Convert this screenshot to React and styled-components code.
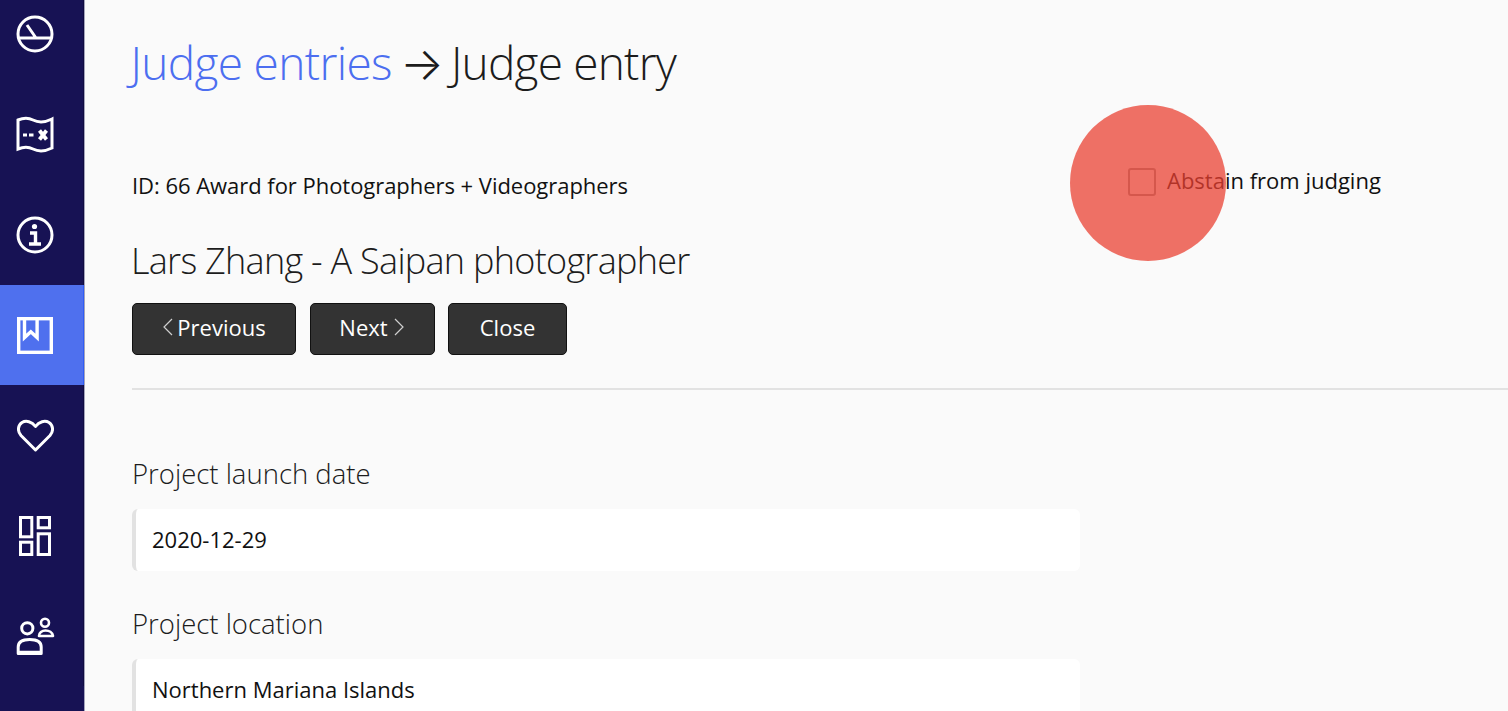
import React from 'react'
import styled, { createGlobalStyle } from 'styled-components'

const GlobalStyle = createGlobalStyle`
  html, body {
    margin: 0;
    height: 100%;
    overflow: hidden;
    background: #fafafa;
    font-family: "Open Sans", "Liberation Sans", sans-serif;
    color: #111;
  }
  * { box-sizing: border-box; }
`

const Page = styled.div`
  display: flex;
  height: 711px;
  overflow: hidden;
  position: relative;
`

const Sidebar = styled.nav`
  flex: 0 0 85px;
  background: #171254;
  overflow: hidden;
  border-right: 1px solid #a4a4bc;
`

const NavList = styled.div`
  display: flex;
  flex-direction: column;
  margin-top: -16px;
`

const NavItem = styled.div`
  height: 100.3px;
  display: flex;
  align-items: center;
  justify-content: center;
  padding-right: 13px;
  background: ${p => (p.$active ? '#4f70ee' : 'transparent')};
  border-right: 1px solid ${p => (p.$active ? '#2f5cf6' : '#100c40')};
  svg { display: block; }
`

const Main = styled.main`
  flex: 1;
  min-width: 0;
  padding: 31px 0 0 47px;
`

const Title = styled.h1`
  margin: 0 0 0 -1.5px;
  font-size: 46px;
  line-height: 63px;
  font-weight: 300;
  letter-spacing: -0.8px;
  white-space: nowrap;
  color: #1c1c1c;
`

const TitleLink = styled.a`
  color: #4c6ef0;
  letter-spacing: -0.65px;
`

const Arrow = styled.span`
  font-family: Inter, "Liberation Sans", sans-serif;
  font-weight: 300;
  letter-spacing: 0;
  margin: 0 -4px 0 -3px;
`

const TopRow = styled.div`
  display: grid;
  grid-template-columns: 996px 1fr;
  margin-top: 75px;
`

const EntryInfo = styled.div`
  min-width: 0;
`

const Meta = styled.div`
  font-size: 22px;
  line-height: 30px;
  letter-spacing: -0.04px;
  white-space: nowrap;
`

const EntryName = styled.h2`
  margin: 36px 0 0 -1px;
  font-size: 36px;
  line-height: 50px;
  font-weight: 300;
  letter-spacing: -0.72px;
  white-space: nowrap;
  color: #1c1c1c;
`

const Abstain = styled.label`
  display: flex;
  align-items: center;
  gap: 11px;
  height: 27px;
  margin-top: -2px;
  font-size: 22px;
  white-space: nowrap;
`

const AbstainText = styled.span`
  margin-bottom: 3px;
`

const CheckBox = styled.span`
  width: 28px;
  height: 28px;
  border: 2px solid #999;
  border-radius: 3px;
`

const Buttons = styled.div`
  display: flex;
  gap: 13.5px;
  margin-top: 17px;
`

const Button = styled.button`
  height: 52px;
  width: ${p => p.$width}px;
  display: flex;
  align-items: center;
  justify-content: center;
  gap: ${p => p.$gap || 4}px;
  padding: 0 0 4px;
  background: #333;
  border: 1px solid #111;
  border-radius: 5px;
  color: #fff;
  font-family: inherit;
  font-size: 22px;
`

const Divider = styled.hr`
  margin: 33px 0 0;
  border: 0;
  border-top: 2px solid #e2e2e2;
`

const Fields = styled.div`
  width: 948px;
  margin-top: 62px;
`

const Field = styled.div`
  margin-bottom: 31px;
`

const FieldLabel = styled.div`
  font-size: 27.5px;
  line-height: 44px;
  font-weight: 300;
  color: #1c1c1c;
`

const FieldValue = styled.div`
  margin-top: 13px;
  height: 62px;
  display: flex;
  align-items: center;
  padding: 0 0 2px 16px;
  background: #fff;
  border-left: 4px solid #e2e2e2;
  border-radius: 6px;
  font-size: 22px;
`

const Spot = styled.div`
  position: absolute;
  left: 1070px;
  top: 105px;
  width: 156px;
  height: 156px;
  border-radius: 50%;
  background: rgba(234, 64, 49, 0.74);
`

const iconProps = {
  fill: 'none',
  stroke: '#fff',
  strokeWidth: 3,
}

const GaugeIcon = () => (
  <svg width="40" height="40" viewBox="0 0 40 40" {...iconProps}>
    <circle cx="20" cy="20" r="17" />
    <path d="M3 24h34M12 11l9 13" />
  </svg>
)

const MapIcon = () => (
  <svg width="40" height="40" viewBox="0 0 40 40" {...iconProps}>
    <path d="M3 6c5-2 10-2.500 15 0 6 3 12 2.500 19-1v29c-7 3.500-13 4-19 1-5-2.500-10-2-15 0z" />
    <path d="M8 21h4M14 21h4.500" />
    <path d="M24.500 16.500l7 9M31.500 16.500l-7 9" strokeWidth="3.800" />
  </svg>
)

const InfoIcon = () => (
  <svg width="40" height="40" viewBox="0 0 40 40" {...iconProps}>
    <circle cx="20" cy="20" r="17" />
    <circle cx="19.500" cy="11.500" r="2.600" fill="#fff" stroke="none" />
    <path d="M15 18h5.500v10.500M14 29h12" strokeWidth="3.400" />
  </svg>
)

const BookmarkIcon = () => (
  <svg width="36" height="37" viewBox="0 0 36 37" fill="none" stroke="#fff" strokeWidth="3.400">
    <rect x="1.700" y="1.700" width="32.600" height="33.600" />
    <path d="M7.500 2v18.500l6.300-5.800 6.300 5.800V2" />
  </svg>
)

const HeartIcon = () => (
  <svg width="37" height="33" viewBox="0 0 37 33" {...iconProps}>
    <path d="M18.500 31L4 16.500C0 12 1 6 5 3.500c4-2.500 10-1 13.500 4 3.500-5 9.500-6.500 13.500-4 4 2.500 5 8.500 1 13z" strokeLinejoin="round" />
  </svg>
)

const GridIcon = () => (
  <svg width="33" height="40" viewBox="0 0 33 40" {...iconProps}>
    <rect x="1.500" y="1.500" width="11.300" height="19.300" />
    <rect x="19.200" y="1.500" width="11.300" height="10.300" />
    <rect x="1.500" y="26.200" width="11.300" height="12.300" />
    <rect x="19.200" y="17.800" width="11.300" height="20.700" />
  </svg>
)

const PeopleIcon = () => (
  <svg width="40" height="40" viewBox="0 0 40 40" {...iconProps}>
    <circle cx="12.300" cy="12.300" r="5.600" />
    <path d="M3.200 37.500V31c0-5 4.500-7.500 11.500-7.500s11.500 2.500 11.500 7.500v6.500z" strokeLinejoin="round" />
    <path d="M3.200 36.500h23" strokeWidth="3.500" />
    <circle cx="30" cy="6.700" r="4" strokeWidth="2.600" />
    <path d="M24 20c0-3.500 3-5.500 6.500-5.500s7 2 7.500 5.500z" strokeWidth="2.600" strokeLinejoin="round" />
  </svg>
)

const Chevron = ({ dir }) => (
  <svg width="11" height="18" viewBox="0 0 11 18" fill="none" stroke="#cfcfcf" strokeWidth="1.200">
    <path d={dir === 'left' ? 'M10 1L2 9l8 8' : 'M1 1l8 8-8 8'} />
  </svg>
)

const navIcons = [GaugeIcon, MapIcon, InfoIcon, BookmarkIcon, HeartIcon, GridIcon, PeopleIcon]

const fields = [
  { label: 'Project launch date', value: '2020-12-29' },
  { label: 'Project location', value: 'Northern Mariana Islands' },
]

export default function App() {
  return (
    <>
      <GlobalStyle />
      <Page>
        <Sidebar>
          <NavList>
            {navIcons.map((Icon, i) => (
              <NavItem key={i} $active={i === 3}>
                <Icon />
              </NavItem>
            ))}
          </NavList>
        </Sidebar>
        <Main>
          <Title>
            <TitleLink>Judge entries</TitleLink> <Arrow>→</Arrow> Judge entry
          </Title>
          <TopRow>
            <EntryInfo>
              <Meta>ID: 66 Award for Photographers + Videographers</Meta>
              <EntryName>Lars Zhang - A Saipan photographer</EntryName>
            </EntryInfo>
            <Abstain>
              <CheckBox />
              <AbstainText>Abstain from judging</AbstainText>
            </Abstain>
          </TopRow>
          <Buttons>
            <Button $width={164}><Chevron dir="left" />Previous</Button>
            <Button $width={125} $gap={6}>Next<Chevron dir="right" /></Button>
            <Button $width={119}>Close</Button>
          </Buttons>
          <Divider />
          <Fields>
            {fields.map(f => (
              <Field key={f.label}>
                <FieldLabel>{f.label}</FieldLabel>
                <FieldValue>{f.value}</FieldValue>
              </Field>
            ))}
          </Fields>
        </Main>
        <Spot />
      </Page>
    </>
  )
}
